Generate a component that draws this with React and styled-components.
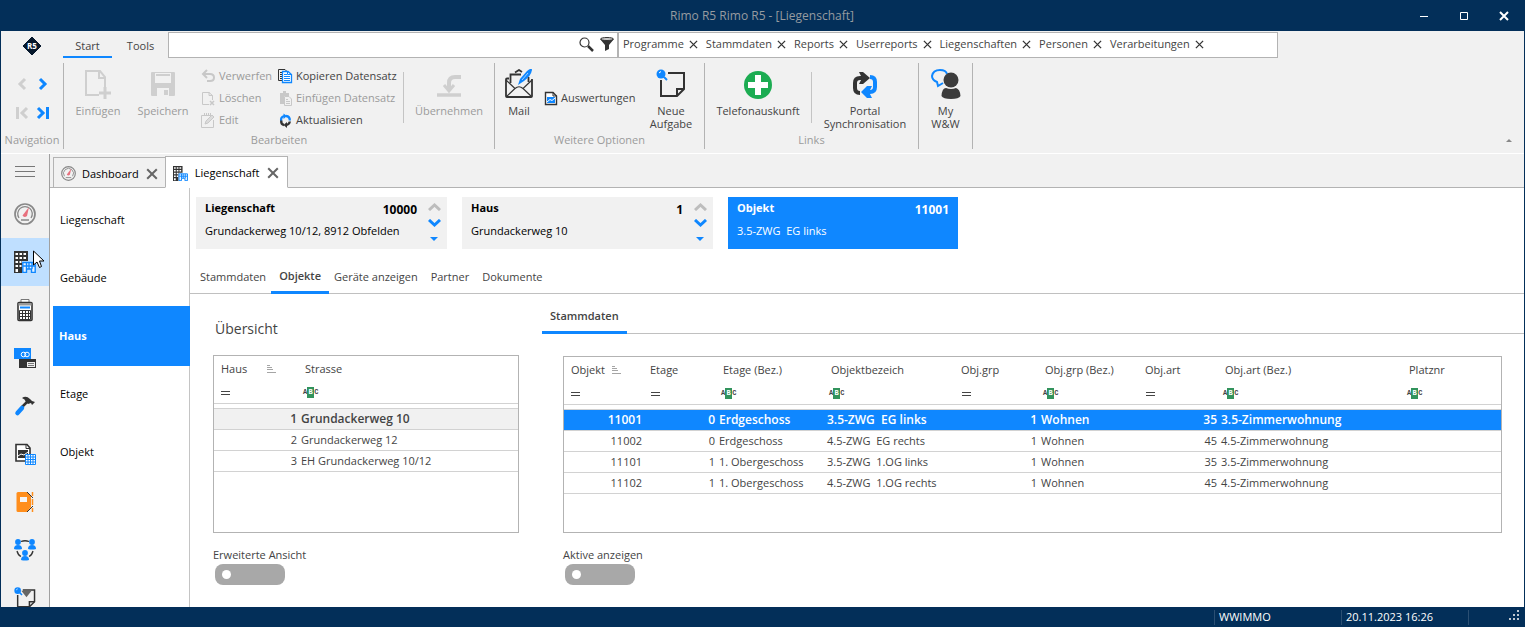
import React, { useState } from "react";
import styled, { createGlobalStyle, css } from "styled-components";

const navy = "#032f59";
const blue = "#0f87ff";
const grey = "#f1f1f1";
const line = "#b3b3b3";
const text = "#444";
const muted = "#9b9b9b";

const GlobalStyle = createGlobalStyle`
  * {
    box-sizing: border-box;
  }
  body {
    margin: 0;
    font-family: "Open Sans", "Noto Sans", sans-serif;
    font-size: 11px;
    line-height: 14px;
    color: ${text};
  }
  button, input {
    font: inherit;
    color: inherit;
    background: none;
    border: 0;
    padding: 0;
    margin: 0;
  }
  svg {
    display: block;
    flex: none;
  }
`;

const Window = styled.div`
  display: flex;
  flex-direction: column;
  height: 100vh;
  background: ${navy};
`;

const TitleBar = styled.header`
  display: grid;
  grid-template-columns: 1fr auto 1fr;
  align-items: center;
  flex: none;
  height: 31px;
  padding-right: 1px;
  color: #969ba0;
`;

const Title = styled.h1`
  grid-column: 2;
  margin: 0;
  font-size: 12px;
  font-weight: 400;
`;

const WindowButtons = styled.div`
  display: flex;
  justify-content: flex-end;
`;

const WindowButton = styled.button`
  display: grid;
  place-items: center;
  width: 40px;
  height: 30px;
`;

const Client = styled.div`
  display: flex;
  flex-direction: column;
  flex: 1;
  min-height: 0;
  margin: 0 1px;
  background: #fff;
`;

const Ribbon = styled.div`
  flex: none;
  background: ${grey};
  border-bottom: 1px solid #fff;
`;

const RibbonTop = styled.div`
  display: flex;
  height: 27px;
  padding-top: 1px;
`;

const Logo = styled.div`
  display: grid;
  place-items: center;
  width: 61px;
  padding-top: 2px;
`;

const RibbonTab = styled.button`
  width: ${(p) => p.$width}px;
  height: 26px;
  padding-top: 3px;
  margin: 0 1px;
  border-bottom: 2px solid ${(p) => (p.$active ? blue : "transparent")};
`;

const SearchBox = styled.label`
  display: flex;
  align-items: center;
  gap: 6px;
  flex: 0 1 450px;
  padding: 0 3px 2px;
  background: #fff;
  border: 1px solid ${line};
`;

const SearchInput = styled.input`
  flex: 1;
  min-width: 0;
  height: 22px;
  padding: 0 6px;
  outline: none;
`;

const Favourites = styled.nav`
  display: flex;
  align-items: center;
  flex: 0 1 660px;
  padding: 0 4px 2px;
  background: #fff;
  border: 1px solid ${line};
`;

const Favourite = styled.span`
  display: flex;
  align-items: center;
  gap: 5px;
  margin-right: 8px;
  white-space: nowrap;
`;

const Link = styled.a`
  color: inherit;
  text-decoration: none;
`;

const RibbonBody = styled.div`
  display: flex;
  height: 95px;
  padding: 5px 0 4px;
`;

const Group = styled.section`
  display: flex;
  flex-direction: column;
  flex: none;
  min-width: ${(p) => p.$width || 0}px;
  border-right: 1px solid ${line};
`;

const GroupItems = styled.div`
  display: flex;
  flex: 1;
`;

const GroupLabel = styled.h2`
  margin: 0;
  padding-bottom: 2px;
  font-size: 11px;
  font-weight: 400;
  text-align: center;
  color: ${muted};
`;

const NavGrid = styled.div`
  display: grid;
  grid-template-columns: 21px 21px;
  grid-auto-rows: 29px;
  padding: 6px 0 0 10px;
`;

const NavButton = styled.button`
  display: grid;
  place-items: center;
`;

const BigButton = styled.button`
  display: flex;
  flex-direction: column;
  align-items: center;
  gap: 5px;
  width: ${(p) => p.$width}px;
  height: 70px;
  padding-top: 6px;
  line-height: 13px;
  color: ${(p) => (p.disabled ? muted : text)};
`;

const SmallColumn = styled.div`
  display: flex;
  flex-direction: column;
  justify-content: center;
  width: ${(p) => p.$width}px;
  height: 70px;
  padding-left: ${(p) => p.$indent || 0}px;
`;

const SmallButton = styled.button`
  display: flex;
  align-items: center;
  gap: 3px;
  height: 22px;
  white-space: nowrap;
  color: ${(p) => (p.disabled ? muted : text)};
`;

const Separator = styled.div`
  width: 1px;
  height: 51px;
  margin-top: 9px;
  background: #c4c4c4;
`;

const CollapseButton = styled.button`
  align-self: flex-end;
  margin: 0 12px 7px auto;
`;

const Workspace = styled.div`
  display: flex;
  flex: 1;
  min-height: 0;
`;

const Sidebar = styled.nav`
  display: flex;
  flex-direction: column;
  flex: none;
  width: 49px;
  overflow: hidden;
  background: ${grey};
  border-right: 1px solid #a0a0a0;
`;

const SidebarButton = styled.button`
  position: relative;
  display: grid;
  place-items: center;
  flex: none;
  height: ${(p) => (p.$menu ? 36 : 48)}px;
  padding-bottom: ${(p) => (p.$menu ? 2 : 0)}px;
  background: ${(p) => (p.$active ? "#bfdfff" : "none")};
`;

const Pointer = styled.svg`
  position: absolute;
  left: 32px;
  top: 12px;
`;

const Page = styled.div`
  display: flex;
  flex-direction: column;
  flex: 1;
  min-width: 0;
`;

const TabStrip = styled.div`
  display: flex;
  align-items: flex-end;
  flex: none;
  height: 34px;
  padding-left: 3px;
  background: ${grey};
  box-shadow: inset 0 -1px ${line};
`;

const DocTab = styled.div`
  display: flex;
  align-items: center;
  gap: 7px;
  height: ${(p) => (p.$active ? 32 : 31)}px;
  margin-right: -1px;
  padding: 2px 7px 0;
  color: #000;
  background: ${(p) => (p.$active ? "#fff" : grey)};
  border: 1px solid ${line};
  ${(p) =>
    p.$active &&
    css`
      gap: 8px;
      padding-right: 8px;
      border-bottom-color: #fff;
    `}
`;

const DocTabButton = styled.button`
  display: flex;
  align-items: center;
  gap: ${(p) => (p.$active ? 7 : 6)}px;
`;

const PageBody = styled.div`
  display: flex;
  flex: 1;
  min-height: 0;
`;

const LevelNav = styled.nav`
  flex: none;
  width: 140px;
  padding: 2px 0 0 3px;
  border-right: 1px solid #c4c4c4;
`;

const LevelButton = styled.button`
  display: block;
  width: calc(100% + 1px);
  height: 60px;
  margin-bottom: -2px;
  padding-left: ${(p) => (p.$active ? 6 : 7)}px;
  text-align: left;
  color: ${(p) => (p.$active ? "#fff" : "#000")};
  font-weight: ${(p) => (p.$active ? 700 : 400)};
  background: ${(p) => (p.$active ? blue : "none")};
`;

const Content = styled.main`
  display: flex;
  flex-direction: column;
  flex: 1;
  min-width: 0;
`;

const Cards = styled.div`
  display: flex;
  gap: 15px;
  padding: 9px 6px 0;
`;

const Card = styled.section`
  display: flex;
  width: ${(p) => (p.$active ? 230 : 251)}px;
  height: 52px;
  padding-left: 9px;
  color: ${(p) => (p.$active ? "#fff" : "#000")};
  background: ${(p) => (p.$active ? blue : grey)};
`;

const CardText = styled.div`
  flex: 1;
  padding-top: 4px;
`;

const CardHead = styled.div`
  display: flex;
  justify-content: space-between;
  height: 23px;
  padding-right: ${(p) => (p.$active ? 9 : 4)}px;
`;

const CardTitle = styled.h3`
  margin: 0;
  font-size: 11px;
  font-weight: 700;
`;

const CardNumber = styled.strong`
  padding-top: 2px;
  font-size: 12px;
`;

const CardValue = styled.div`
  white-space: pre;
`;

const Stepper = styled.div`
  display: flex;
  flex-direction: column;
  align-items: center;
  gap: 8px;
  width: 26px;
  padding-top: 6px;
`;

const SubTabs = styled.div`
  display: flex;
  margin-top: ${(p) => p.$top}px;
  padding-left: ${(p) => p.$left}px;
  box-shadow: inset 0 -1px #c0c0c0;
`;

const SubTab = styled.button`
  height: 33px;
  margin-right: -3px;
  padding: ${(p) => (p.$active ? 0 : 2)}px 8px 0;
  font-weight: ${(p) => (p.$active ? 600 : 400)};
  border-bottom: 3px solid ${(p) => (p.$active ? blue : "transparent")};
`;

const Columns = styled.div`
  display: flex;
`;

const Overview = styled.section`
  flex: none;
  width: 329px;
  margin-left: 23px;
  padding-right: 23px;
`;

const OverviewTitle = styled.h2`
  margin: 25px 0 16px;
  padding-left: 2px;
  font-size: 14px;
  font-weight: 400;
  line-height: 20px;
`;

const Details = styled.section`
  flex: 1;
  min-width: 0;
`;

const DetailsBody = styled.div`
  padding: 22px 22px 0 21px;
`;

const GridFrame = styled.div`
  height: ${(p) => p.$height}px;
  overflow: hidden;
  border: 1px solid ${line};
`;

const Table = styled.table`
  width: 100%;
  table-layout: fixed;
  border-collapse: separate;
  border-spacing: 0;
`;

const Th = styled.th`
  height: 26px;
  padding: 0 0 0 ${(p) => (p.$first ? 7 : 6)}px;
  font-weight: 400;
  text-align: left;
  white-space: nowrap;
`;

const HeadLabel = styled.span`
  display: flex;
  align-items: center;
  gap: ${(p) => p.$gap}px;
`;

const FilterCell = styled.td`
  height: 22px;
  padding: 0 0 0 ${(p) => (p.$abc ? 4 : 7)}px;
  border-bottom: 1px solid #d2d2d2;
`;

const Gap = styled.td`
  height: 5px;
  padding: 0;
  border-bottom: 1px solid #d2d2d2;
`;

const Td = styled.td`
  height: 21px;
  padding: 0 2px;
  border-bottom: 1px solid #d2d2d2;
  text-align: ${(p) => (p.$right ? "right" : "left")};
  white-space: pre;
`;

const Row = styled.tr`
  ${(p) =>
    p.$selected &&
    css`
      font-size: 12px;
      font-weight: 600;
      color: ${p.$light ? "inherit" : "#fff"};
      background: ${p.$light ? grey : blue};
    `}
`;

const Abc = styled.span`
  display: flex;
  align-items: center;
  font-family: "Liberation Mono", monospace;
  font-size: 7px;
  font-weight: 700;
  line-height: 11px;
`;

const AbcMiddle = styled.span`
  width: 7px;
  text-align: center;
  color: #fff;
  background: #32935c;
`;

const ToggleLabel = styled.label`
  display: flex;
  flex-direction: column;
  align-items: flex-start;
  gap: 2px;
  margin-top: 15px;
`;

const Toggle = styled.input`
  appearance: none;
  display: flex;
  align-items: center;
  width: 70px;
  height: 21px;
  margin-left: 2px;
  padding: 0 7px;
  border-radius: 8px;
  background: ${(p) => (p.checked ? blue : "#a8a8a8")};

  &::before {
    content: "";
    width: 9px;
    height: 9px;
    margin-left: ${(p) => (p.checked ? "auto" : 0)};
    border-radius: 50%;
    background: #fff;
  }
`;

const StatusBar = styled.footer`
  display: flex;
  justify-content: flex-end;
  align-items: center;
  flex: none;
  height: 20px;
  padding-right: 5px;
  color: #fff;
`;

const StatusCell = styled.span`
  width: 127px;
  height: 15px;
  padding-left: 4px;
  border-left: 1px solid #2b4f73;
`;

const Grip = styled.span`
  display: flex;
  justify-content: flex-end;
  width: 52px;
  height: 15px;
  border-left: 1px solid #2b4f73;
`;

/* ---------- icons ---------- */

const Cross = ({ size = 9, color = "#333", width = 1.3 }) => (
  <svg width={size} height={size} viewBox="0 0 10 10">
    <path d="M1 1L9 9M9 1L1 9" stroke={color} strokeWidth={(width * 10) / size} />
  </svg>
);

const Chevron = ({ left, bar, color }) => (
  <svg width="14" height="14" viewBox="0 0 14 14" fill="none" stroke={color} strokeWidth="3">
    <g transform={left ? "translate(14 0) scale(-1 1)" : undefined}>
      <path d={bar ? "M2 2L7 7L2 12" : "M4 2L9 7L4 12"} />
      {bar && <path d="M11.500 1V13" />}
    </g>
  </svg>
);

const PageAddIcon = () => (
  <svg width="30" height="30" viewBox="0 0 30 30" fill="none" stroke="#cfcfcf" strokeWidth="2">
    <path d="M16 26H3V2H17L22 8V19M16 2V9H22" />
    <path d="M22 18V30M16 24H28" strokeWidth="3" />
  </svg>
);

const SaveIcon = () => (
  <svg width="30" height="30" viewBox="0 0 30 30" fill="#cfcfcf">
    <path fillRule="evenodd" d="M4 3H26Q27 3 27 4V26Q27 27 26 27H4Q3 27 3 26V4Q3 3 4 3ZM7 4V14H23V4ZM9 19V27H21V19Z" />
    <path d="M16 21H20V26H16ZM8 5H22V7H8Z" />
  </svg>
);

const TakeOverIcon = () => (
  <svg width="30" height="30" viewBox="0 0 30 30" fill="none" stroke="#cfcfcf">
    <path d="M27 8H21Q15 8 15 14V21" strokeWidth="4" />
    <path d="M10 16L15 22L20 16" strokeWidth="3" />
    <path d="M3 26H27" strokeWidth="3.500" />
  </svg>
);

const UndoIcon = () => (
  <svg width="15" height="15" viewBox="0 0 15 15" fill="none" stroke="#c8c8c8" strokeWidth="2">
    <path d="M6 1L2 5L6 9M2 5H9Q13 5 13 8.500T9 12H6" />
  </svg>
);

const PageDeleteIcon = () => (
  <svg width="15" height="15" viewBox="0 0 15 15" fill="none" stroke="#c8c8c8">
    <path d="M8 13.500H1.500V1.500H8L11.500 4.500V9M8 1V4.500H11.500" />
    <path d="M9 10L13 14M13 10L9 14" strokeWidth="1.500" />
  </svg>
);

const EditIcon = () => (
  <svg width="15" height="15" viewBox="0 0 15 15" fill="none" stroke="#c8c8c8">
    <path d="M11 2.500H.5V14.500H12.500V7M3.500 0V3M5.500 0V3M7.500 0V3M9.500 0V3" />
    <path d="M4 11L5 8L11 2L13 4L7 10Z" fill="#dcdcdc" />
  </svg>
);

const CopyIcon = () => (
  <svg width="15" height="15" viewBox="0 0 15 15" fill="none">
    <path d="M4 11.500H.5V.5H7L9 2.500M2 3.500H5M2 5.500H5M2 7.500H5M2 9.500H5" stroke="#333" />
    <path d="M4.500 2.500H10L13.500 5.500V13.500H4.500Z" fill="#fff" stroke={blue} strokeWidth="1.300" />
    <path d="M6 5.500H9M6 7.500H12M6 9.500H12M6 11.500H12M9.500 2.500V5.500H13.500" stroke={blue} />
  </svg>
);

const PasteIcon = () => (
  <svg width="15" height="15" viewBox="0 0 15 15">
    <path d="M2 2H5V0H8V2H11V5H6V13H2Z" fill="#c8c8c8" />
    <path d="M6.500 5.500H11L13.500 8V14.500H6.500ZM8 8.500H10M8 10.500H12M8 12.500H12" fill={grey} stroke="#c8c8c8" />
  </svg>
);

const RefreshIcon = () => (
  <svg width="15" height="15" viewBox="0 0 15 15" fill="none" strokeWidth="2.300">
    <path d="M3.200 8Q2.500 4 6 3M8 3Q12 3.500 11.800 7.500" stroke={blue} />
    <path d="M5.500 .5L9 3L5.500 6Z" fill={blue} />
    <path d="M3.200 7.500Q3 11.500 6 12M8 12Q11.500 11.500 11.800 8.500" stroke="#333" />
    <path d="M9 9L5.500 12L9 15Z" fill="#333" />
  </svg>
);

const MailIcon = () => (
  <svg width="30" height="30" viewBox="0 0 30 30" fill="none" stroke="#333" strokeWidth="1.800">
    <path d="M5 9.500H3Q2 9.500 2 10.500V27Q2 28 3 28H27Q28 28 28 27V10" />
    <path d="M2 11L11 19.500L2 28M28 11L19 19.500L28 28M11 19.500Q15 16 19 19.500" strokeWidth="1.200" />
    <path d="M6.500 14V5.500H17M24.500 8V13M11 3.500L15 1L18 3" />
    <path d="M14 16L16 10L23 2Q28 -2 28 1Q27 7 20 12Z" fill={blue} stroke="none" />
    <path d="M18 11L24 4" stroke="#fff" strokeWidth="0.600" />
  </svg>
);

const ChartPageIcon = () => (
  <svg width="14" height="15" viewBox="0 0 14 15">
    <path d="M1.500 1.500H9L12.500 5V13.500H1.500Z" fill="#fff" stroke="#333" strokeWidth="1.400" />
    <path d="M9 1V5H13" fill="none" stroke="#333" />
    <path d="M3 6H11V12H3Z" fill={blue} />
    <path d="M3 11L6 8.500L8 9.500L11 7" fill="none" stroke="#fff" />
  </svg>
);

const TaskIcon = ({ size = 30, filter }) => (
  <svg width={size} height={size} viewBox="0 0 30 30" fill="none" stroke="#333" strokeWidth="2">
    <path d="M5 11V27H21L28 20V4H12" />
    <path d="M21 27V20H28" />
    {filter && <path d="M10 5H24L17 14Z" fill="#666" stroke="none" />}
    <circle cx="5" cy="5" r="4.500" fill={blue} stroke="none" />
    <path d="M8 8L11 11" stroke={blue} />
    <path d="M3 4L5 2.500" stroke="#fff" strokeWidth="1" />
  </svg>
);

const PhoneInfoIcon = () => (
  <svg width="30" height="30" viewBox="0 0 30 30">
    <circle cx="15" cy="16" r="14" fill="#1cac52" />
    <path d="M15 6V26M5 16H25" stroke="#fff" strokeWidth="6" />
  </svg>
);

const SyncIcon = () => (
  <svg width="30" height="30" viewBox="0 0 30 30" fill="none" strokeWidth="4">
    <path d="M10 24Q5 24 5 19V14Q5 9 10 9H13" stroke="#333" />
    <path d="M9 3H13L20 9L13 15H9L12 9Z" fill="#333" />
    <path d="M20 8Q25 8 25 13V18Q25 23 20 23H17" stroke={blue} />
    <path d="M22 17H17L11 23L17 29H22L19 23Z" fill={blue} />
  </svg>
);

const PersonIcon = () => (
  <svg width="30" height="30" viewBox="0 0 30 30">
    <path d="M12 14L7 17L6 13Q1 11 1 7Q2 1 9 1Q15 1 16 5" fill="none" stroke={blue} strokeWidth="2" />
    <circle cx="20" cy="11" r="7.500" fill="#3c3c3c" />
    <path d="M10.500 27Q11 19 15 19Q20 21 25 19Q29 20 29.500 27Q28 30 20 30Q12 30 10.500 27Z" fill="#3c3c3c" />
  </svg>
);

const GaugeIcon = ({ size = 22 }) => (
  <svg width={size} height={size} viewBox="0 0 22 22" fill="none" stroke="#888">
    <circle cx="11" cy="11" r="10" strokeWidth="1.700" />
    <path d="M5 15A7.300 7.300 0 1 1 17 15M7 17H15" strokeWidth="1.300" />
    <path d="M8.500 12.500L15 4L13 13Q10 15 8.500 12.500Z" fill="#e8707e" stroke="none" />
  </svg>
);

const BuildingIcon = ({ size = 22 }) => (
  <svg width={size} height={size} viewBox="0 0 22 22" fill="none">
    <path d="M0 0H14V10H8V22H0Z" fill="#333" />
    <path
      d="M1.500 2H4V4H1.500ZM5.500 2H8V4H5.500ZM9.500 2H12V4H9.500ZM1.500 6H4V8H1.500ZM5.500 6H8V8H5.500ZM9.500 6H12V8H9.500ZM1.500 10H4V12H1.500ZM5.500 10H7.500V12H5.500ZM1.500 14H4V16H1.500ZM5.500 14H7.500V16H5.500ZM1.500 18H4V21H1.500Z"
      fill="#fff"
    />
    <path
      d="M8.800 21.500V11.500H21.200V21.500H17.500V18H12.500V21.500ZM9 15H21M12.500 11.500V18M15 11.500V18M18 11.500V18"
      fill="#e8f3ff"
      stroke={blue}
      strokeWidth="1.400"
    />
  </svg>
);

const CalculatorIcon = () => (
  <svg width="22" height="24" viewBox="0 0 22 24" fill="none" stroke="#333">
    <path d="M7 6V1.500H15V6" fill="#fff" stroke="#777" />
    <rect x="4" y="4.500" width="14" height="18" rx="1" fill="#fff" strokeWidth="1.600" />
    <path d="M4.500 5H17.500V7.500H4.500Z" fill="#999" stroke="none" />
    <path d="M6 9.500H16" stroke={blue} strokeWidth="2" />
    <path d="M5.500 12.500H16.500V21.500H5.500ZM6 15.500H16M6 18.500H16M8.500 13V21M11.500 13V21M14.500 13V21" />
  </svg>
);

const CardsIcon = () => (
  <svg width="22" height="22" viewBox="0 0 22 22">
    <path d="M0 1H17V12H0Z" fill={blue} />
    <circle cx="9.500" cy="7.500" r="2.300" fill="none" stroke="#fff" />
    <circle cx="13" cy="7.500" r="2.300" fill="none" stroke="#fff" />
    <path d="M5 12H22V21H5Z" fill="#333" />
    <path d="M13 15H21V20H13Z" fill="#eee" />
    <path d="M14 16.500H20M14 18.500H20" stroke="#777" />
  </svg>
);

const HammerIcon = () => (
  <svg width="22" height="22" viewBox="0 0 22 22">
    <path d="M8 3Q12 0 16 4L18 6L21 7L18 10L17 8L14 9L12 7Q11 4 8 3Z" fill="#333" />
    <path d="M13 7L8 12" stroke="#333" strokeWidth="2.500" />
    <path d="M8 13L3.500 18" stroke={blue} strokeWidth="4.500" strokeLinecap="round" />
  </svg>
);

const ReportIcon = () => (
  <svg width="22" height="22" viewBox="0 0 22 22" fill="none" stroke="#333">
    <path d="M2 1.500H13L16 5V18H2Z" fill="#fff" strokeWidth="1.600" />
    <path d="M12 1V5.500H16" />
    <path d="M4 7H14V15H4Z" fill="#333" stroke="none" />
    <path d="M4 13L7 11L10 12L14 9" stroke="#fff" />
    <path d="M11.500 11.500H21.500V21.500H11.500ZM14 11V22M16.500 11V22M19 11V22M11 14H22M11 16.500H22M11 19H22" fill="#fff" stroke={blue} />
  </svg>
);

const FolderIcon = () => (
  <svg width="22" height="22" viewBox="0 0 22 22">
    <path d="M4 1H13L17 5V16L13 21H4Q2.500 21 2.500 19.500V2.500Q2.500 1 4 1Z" fill="#ff8e1c" />
    <path d="M6 6H13V11H6Z" fill="#f5f5f5" />
    <path d="M13 1L19 7M13 21L19 15" stroke="#333" />
    <path d="M18.500 1V5M18.500 8V14M18.500 17V21" stroke="#ff8e1c" strokeWidth="1.500" />
  </svg>
);

const TeamIcon = () => (
  <svg width="22" height="22" viewBox="0 0 22 22" fill={blue}>
    <path d="M7 2.500Q11 1 15 2.500M3 12Q4 16 7 17.500M19 12Q18 16 15 17.500" fill="none" stroke="#333" strokeWidth="1.300" />
    {[[4, 3], [18, 3], [11, 14]].map(([x, y]) => (
      <g key={`${x}-${y}`}>
        <circle cx={x} cy={y} r="2.900" />
        <path d={`M${x - 4} ${y + 7}Q${x - 4} ${y + 3} ${x} ${y + 3}T${x + 4} ${y + 7}Q${x} ${y + 8} ${x - 4} ${y + 7}Z`} />
      </g>
    ))}
  </svg>
);

const SortIcon = () => (
  <svg width="9" height="8" viewBox="0 0 9 8" stroke="#a5a5a5">
    <path d="M0 .5H3M0 2.500H5M0 4.500H6M0 7.500H9" />
  </svg>
);

const EqualsIcon = () => (
  <svg width="9" height="4" viewBox="0 0 9 4" stroke="#444">
    <path d="M0 .5H9M0 3.500H9" />
  </svg>
);

const UpDownIcon = ({ down }) => (
  <svg width="13" height="8" viewBox="0 0 13 8" fill="none" strokeWidth="3">
    <path d={down ? "M1 1L6.500 6L12 1" : "M1 7L6.500 2L12 7"} stroke={down ? blue : "#bdbdbd"} />
  </svg>
);

/* ---------- data ---------- */

const favourites = [
  "Programme",
  "Stammdaten",
  "Reports",
  "Userreports",
  "Liegenschaften",
  "Personen",
  "Verarbeitungen",
];

const modules = [
  { name: "Dashboard", icon: <GaugeIcon /> },
  { name: "Liegenschaft", icon: <BuildingIcon /> },
  { name: "Buchhaltung", icon: <CalculatorIcon /> },
  { name: "Zahlungen", icon: <CardsIcon /> },
  { name: "Unterhalt", icon: <HammerIcon /> },
  { name: "Auswertungen", icon: <ReportIcon /> },
  { name: "Dossier", icon: <FolderIcon /> },
  { name: "Personen", icon: <TeamIcon /> },
  { name: "Aufgaben", icon: <TaskIcon size={22} filter /> },
];

const levels = ["Liegenschaft", "Gebäude", "Haus", "Etage", "Objekt"];
const subTabs = ["Stammdaten", "Objekte", "Geräte anzeigen", "Partner", "Dokumente"];

const houseColumns = [
  { label: "Haus", width: 85, right: true, sort: 20 },
  { label: "Strasse", abc: true },
];

const houses = [
  ["1", "Grundackerweg 10"],
  ["2", "Grundackerweg 12"],
  ["3", "EH Grundackerweg 10/12"],
];

const objectColumns = [
  { label: "Objekt", width: 80, right: true, sort: 7 },
  { label: "Etage", width: 73, right: true },
  { label: "Etage (Bez.)", width: 108, abc: true },
  { label: "Objektbezeich", width: 130, abc: true },
  { label: "Obj.grp", width: 84, right: true },
  { label: "Obj.grp (Bez.)", width: 100, abc: true },
  { label: "Obj.art", width: 80, right: true },
  { label: "Obj.art (Bez.)", width: 184, abc: true },
  { label: "Platznr", abc: true },
];

const objects = [
  ["11001", "0", "Erdgeschoss", "3.5-ZWG  EG links", "1", "Wohnen", "35", "3.5-Zimmerwohnung", ""],
  ["11002", "0", "Erdgeschoss", "4.5-ZWG  EG rechts", "1", "Wohnen", "45", "4.5-Zimmerwohnung", ""],
  ["11101", "1", "1. Obergeschoss", "3.5-ZWG  1.OG links", "1", "Wohnen", "35", "3.5-Zimmerwohnung", ""],
  ["11102", "1", "1. Obergeschoss", "4.5-ZWG  1.OG rechts", "1", "Wohnen", "45", "4.5-Zimmerwohnung", ""],
];

/* ---------- components ---------- */

const DataGrid = ({ columns, rows, height, light }) => {
  const [selected, setSelected] = useState(0);

  return (
    <GridFrame $height={height}>
      <Table>
        <colgroup>
          {columns.map((c) => (
            <col key={c.label} width={c.width} />
          ))}
        </colgroup>
        <thead>
          <tr>
            {columns.map((c, i) => (
              <Th key={c.label} $first={i === 0}>
                <HeadLabel $gap={c.sort}>
                  {c.label}
                  {c.sort && <SortIcon />}
                </HeadLabel>
              </Th>
            ))}
          </tr>
          <tr>
            {columns.map((c) => (
              <FilterCell key={c.label} $abc={c.abc}>
                {c.abc ? (
                  <Abc>
                    A<AbcMiddle>B</AbcMiddle>C
                  </Abc>
                ) : (
                  <EqualsIcon />
                )}
              </FilterCell>
            ))}
          </tr>
          <tr>
            <Gap colSpan={columns.length} />
          </tr>
        </thead>
        <tbody>
          {rows.map((row, i) => (
            <Row
              key={row[0]}
              $selected={i === selected}
              $light={light}
              onClick={() => setSelected(i)}
            >
              {row.map((value, j) => (
                <Td key={columns[j].label} $right={columns[j].right}>
                  {value}
                </Td>
              ))}
            </Row>
          ))}
        </tbody>
      </Table>
    </GridFrame>
  );
};

const Switch = ({ label }) => {
  const [on, setOn] = useState(false);
  return (
    <ToggleLabel>
      {label}
      <Toggle type="checkbox" checked={on} onChange={() => setOn(!on)} />
    </ToggleLabel>
  );
};

const InfoCard = ({ title, number, value, active }) => (
  <Card $active={active}>
    <CardText>
      <CardHead $active={active}>
        <CardTitle>{title}</CardTitle>
        <CardNumber>{number}</CardNumber>
      </CardHead>
      <CardValue>{value}</CardValue>
    </CardText>
    {!active && (
      <Stepper>
        <button aria-label="Vorheriger">
          <UpDownIcon />
        </button>
        <button aria-label="Nächster">
          <UpDownIcon down />
        </button>
        <button aria-label="Liste">
          <svg width="8" height="8" viewBox="0 0 8 8">
            <path d="M0 2H8L4 6Z" fill={blue} />
          </svg>
        </button>
      </Stepper>
    )}
  </Card>
);

const RibbonGroups = () => (
  <RibbonBody>
    <Group $width={63}>
      <GroupItems>
        <NavGrid>
          <NavButton aria-label="Zurück" disabled>
            <Chevron left color="#cfcfcf" />
          </NavButton>
          <NavButton aria-label="Weiter">
            <Chevron color={blue} />
          </NavButton>
          <NavButton aria-label="Erster" disabled>
            <Chevron left bar color="#cfcfcf" />
          </NavButton>
          <NavButton aria-label="Letzter">
            <Chevron bar color={blue} />
          </NavButton>
        </NavGrid>
      </GroupItems>
      <GroupLabel>Navigation</GroupLabel>
    </Group>

    <Group>
      <GroupItems>
        <BigButton $width={68} disabled>
          <PageAddIcon />
          Einfügen
        </BigButton>
        <BigButton $width={62} disabled>
          <SaveIcon />
          Speichern
        </BigButton>
        <SmallColumn $width={84} $indent={7}>
          <SmallButton disabled>
            <UndoIcon />
            Verwerfen
          </SmallButton>
          <SmallButton disabled>
            <PageDeleteIcon />
            Löschen
          </SmallButton>
          <SmallButton disabled>
            <EditIcon />
            Edit
          </SmallButton>
        </SmallColumn>
        <SmallColumn $width={125}>
          <SmallButton>
            <CopyIcon />
            Kopieren Datensatz
          </SmallButton>
          <SmallButton disabled>
            <PasteIcon />
            Einfügen Datensatz
          </SmallButton>
          <SmallButton>
            <RefreshIcon />
            Aktualisieren
          </SmallButton>
        </SmallColumn>
        <Separator />
        <BigButton $width={90} disabled>
          <TakeOverIcon />
          Übernehmen
        </BigButton>
      </GroupItems>
      <GroupLabel>Bearbeiten</GroupLabel>
    </Group>

    <Group>
      <GroupItems>
        <BigButton $width={48}>
          <MailIcon />
          Mail
        </BigButton>
        <SmallColumn $width={95} $indent={1}>
          <SmallButton>
            <ChartPageIcon />
            Auswertungen
          </SmallButton>
        </SmallColumn>
        <BigButton $width={66}>
          <TaskIcon />
          <span>
            Neue
            <br />
            Aufgabe
          </span>
        </BigButton>
      </GroupItems>
      <GroupLabel>Weitere Optionen</GroupLabel>
    </Group>

    <Group>
      <GroupItems>
        <BigButton $width={106}>
          <PhoneInfoIcon />
          Telefonauskunft
        </BigButton>
        <Separator />
        <BigButton $width={106}>
          <SyncIcon />
          <span>
            Portal
            <br />
            Synchronisation
          </span>
        </BigButton>
      </GroupItems>
      <GroupLabel>Links</GroupLabel>
    </Group>

    <Group>
      <GroupItems>
        <BigButton $width={53}>
          <PersonIcon />
          <span>
            My
            <br />
            W&amp;W
          </span>
        </BigButton>
      </GroupItems>
    </Group>

    <CollapseButton aria-label="Menüband reduzieren">
      <svg width="6" height="3" viewBox="0 0 6 3">
        <path d="M0 3L3 0L6 3Z" fill="#888" />
      </svg>
    </CollapseButton>
  </RibbonBody>
);

const App = () => {
  const [subTab, setSubTab] = useState("Objekte");
  const [level, setLevel] = useState("Haus");

  return (
    <Window>
      <GlobalStyle />
      <TitleBar>
        <Title>Rimo R5 Rimo R5 - [Liegenschaft]</Title>
        <WindowButtons>
          <WindowButton aria-label="Minimieren">
            <svg width="8" height="8" viewBox="0 0 8 8">
              <path d="M0 4.500H8" stroke="#fff" />
            </svg>
          </WindowButton>
          <WindowButton aria-label="Maximieren">
            <svg width="8" height="8" viewBox="0 0 8 8">
              <path d="M.5 .5H7.500V7.500H.5Z" fill="none" stroke="#fff" />
            </svg>
          </WindowButton>
          <WindowButton aria-label="Schliessen">
            <Cross size={10} color="#fff" width={2} />
          </WindowButton>
        </WindowButtons>
      </TitleBar>

      <Client>
        <Ribbon>
          <RibbonTop>
            <Logo>
              <svg width="20" height="20" viewBox="0 0 20 20">
                <path d="M10 1L19 10L10 19L1 10Z" fill="#06182c" stroke="#06182c" strokeLinejoin="round" />
                <text x="10" y="13" textAnchor="middle" fontSize="8" fontWeight="700" fill="#fff">
                  R5
                </text>
              </svg>
            </Logo>
            <RibbonTab $width={49} $active>
              Start
            </RibbonTab>
            <RibbonTab $width={53}>Tools</RibbonTab>
            <SearchBox>
              <SearchInput type="text" aria-label="Suche" />
              <svg width="15" height="15" viewBox="0 0 15 15" fill="none" stroke="#333">
                <circle cx="5.500" cy="5.500" r="4.500" strokeWidth="1.200" />
                <path d="M9 9L14 14" strokeWidth="2.500" />
              </svg>
              <svg width="14" height="14" viewBox="0 0 14 14">
                <path d="M0 2L5 8V14L9 12V8L14 2Z" fill="#333" />
                <ellipse cx="7" cy="2" rx="6.500" ry="1.500" fill="#ccc" stroke="#333" />
              </svg>
            </SearchBox>
            <Favourites>
              {favourites.map((name) => (
                <Favourite key={name}>
                  <Link href="#">{name}</Link>
                  <button aria-label={`${name} entfernen`}>
                    <Cross />
                  </button>
                </Favourite>
              ))}
            </Favourites>
          </RibbonTop>
          <RibbonGroups />
        </Ribbon>

        <Workspace>
          <Sidebar>
            <SidebarButton $menu aria-label="Menü">
              <svg width="20" height="11" viewBox="0 0 20 11" stroke="#777">
                <path d="M0 .5H20M0 5.500H20M0 10.500H20" />
              </svg>
            </SidebarButton>
            {modules.map((m, i) => (
              <SidebarButton key={m.name} aria-label={m.name} $active={i === 1}>
                {m.icon}
                {i === 1 && (
                  <Pointer width="12" height="19" viewBox="0 0 12 19">
                    <path
                      d="M.5 1V15L4 12L6.500 17.500L8.500 16.500L6.500 11H11Z"
                      fill="#fff"
                      stroke="#000"
                    />
                  </Pointer>
                )}
              </SidebarButton>
            ))}
          </Sidebar>

          <Page>
            <TabStrip>
              <DocTab>
                <DocTabButton>
                  <GaugeIcon size={15} />
                  Dashboard
                </DocTabButton>
                <button aria-label="Dashboard schliessen">
                  <Cross size={12} color="#666" width={2} />
                </button>
              </DocTab>
              <DocTab $active>
                <DocTabButton $active>
                  <BuildingIcon size={15} />
                  Liegenschaft
                </DocTabButton>
                <button aria-label="Liegenschaft schliessen">
                  <Cross size={12} color="#666" width={2} />
                </button>
              </DocTab>
            </TabStrip>

            <PageBody>
              <LevelNav>
                {levels.map((name) => (
                  <LevelButton
                    key={name}
                    $active={name === level}
                    onClick={() => setLevel(name)}
                  >
                    {name}
                  </LevelButton>
                ))}
              </LevelNav>

              <Content>
                <Cards>
                  <InfoCard
                    title="Liegenschaft"
                    number="10000"
                    value="Grundackerweg 10/12, 8912 Obfelden"
                  />
                  <InfoCard title="Haus" number="1" value="Grundackerweg 10" />
                  <InfoCard title="Objekt" number="11001" value="3.5-ZWG  EG links" active />
                </Cards>

                <SubTabs $top={12} $left={2}>
                  {subTabs.map((name) => (
                    <SubTab
                      key={name}
                      $active={name === subTab}
                      onClick={() => setSubTab(name)}
                    >
                      {name}
                    </SubTab>
                  ))}
                </SubTabs>

                <Columns>
                  <Overview>
                    <OverviewTitle>Übersicht</OverviewTitle>
                    <DataGrid columns={houseColumns} rows={houses} height={178} light />
                    <Switch label="Erweiterte Ansicht" />
                  </Overview>
                  <Details>
                    <SubTabs $top={7} $left={0}>
                      <SubTab $active>Stammdaten</SubTab>
                    </SubTabs>
                    <DetailsBody>
                      <DataGrid columns={objectColumns} rows={objects} height={177} />
                      <Switch label="Aktive anzeigen" />
                    </DetailsBody>
                  </Details>
                </Columns>
              </Content>
            </PageBody>
          </Page>
        </Workspace>
      </Client>

      <StatusBar>
        <StatusCell>WWIMMO</StatusCell>
        <StatusCell>20.11.2023 16:26</StatusCell>
        <Grip>
          <svg width="11" height="11" viewBox="0 0 11 11" fill="#c0c8d0">
            <path d="M8 0H10V2H8ZM4 4H6V6H4ZM8 4H10V6H8ZM0 8H2V10H0ZM4 8H6V10H4ZM8 8H10V10H8Z" />
          </svg>
        </Grip>
      </StatusBar>
    </Window>
  );
};

export default App;
